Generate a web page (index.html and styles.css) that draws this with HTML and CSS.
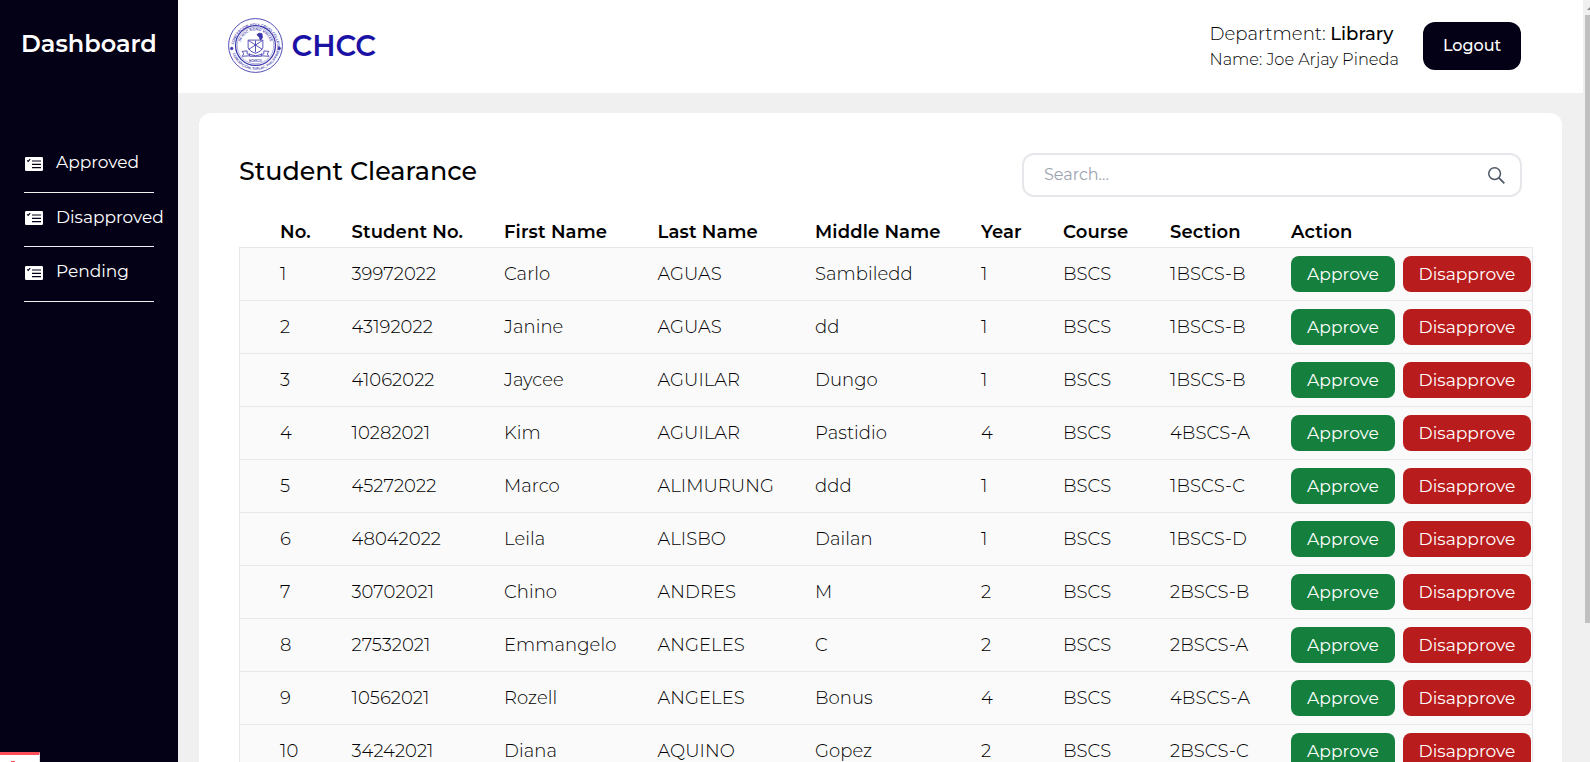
FILE: index.html
```html
<!DOCTYPE html>
<html lang="en">
<head>
<meta charset="utf-8">
<title>Student Clearance</title>
<link rel="stylesheet" href="styles.css">
</head>
<body>
<svg class="defs" width="0" height="0">
  <symbol id="list" viewBox="0 0 18 14">
    <rect width="18" height="14" rx="1.3" fill="#fff"/>
    <path d="M2.200 3.300l1 1 2-2.100M7 4h9M7 7.300h9M7 10.600h9" fill="none" stroke="#030016" stroke-width="1.200"/>
  </symbol>
</svg>
<div class="app">
  <aside class="sidebar">
    <h1 class="brand">Dashboard</h1>
    <nav class="nav">
      <a class="nav-item"><svg class="nav-icon"><use href="#list"/></svg><span>Approved</span></a>
      <a class="nav-item"><svg class="nav-icon"><use href="#list"/></svg><span>Disapproved</span></a>
      <a class="nav-item"><svg class="nav-icon"><use href="#list"/></svg><span>Pending</span></a>
    </nav>
  </aside>
  <main class="main">
    <header class="header">
      <svg class="seal" viewBox="0 0 56 56" fill="none" stroke="#3b36ab">
        <defs>
          <path id="arc-top" d="M5.800 30a22.200 22.200 0 1 1 44.400 0"/>
          <path id="arc-bottom" d="M3.300 28a24.700 24.700 0 0 0 49.400 0"/>
          <path id="arc-inner" d="M12.500 28a15.500 15.500 0 0 1 31 0"/>
        </defs>
        <circle cx="28" cy="28" r="27.400" stroke-width=".9"/>
        <circle cx="28" cy="28" r="20.300" stroke-width="1.300"/>
        <circle cx="28" cy="28" r="18.600" stroke-width=".4"/>
        <g class="seal-text">
          <text><textPath href="#arc-top" startOffset="3">CONCEPCION HOLY CROSS COLLEGE, INC.</textPath></text>
          <text><textPath href="#arc-bottom" startOffset="8">CONCEPCION, TARLAC, PHILIPPINES</textPath></text>
          <text><textPath href="#arc-inner" startOffset="4">IN HOC SIGNO VINCES</textPath></text>
          <text class="seal-year" x="21.500" y="44.600">MCMXCIV</text>
        </g>
        <circle cx="3.800" cy="31" r="1.200" fill="#3b36ab"/><circle cx="52.200" cy="31" r="1.200" fill="#3b36ab"/>
        <path d="M20.500 22.500h15v8q-2 4-7.500 5.500q-5.500-1.500-7.500-5.500zM21 23l14 9M35 23l-14 9M28 23v12M14.500 34l5-.5v3l8.500 2 8.500-2v-3l5 .5-1.500 2.500 1.500 2.500-7-.5M14.500 34l1.500 2.500-1.500 2.500 7-.5M22 36v3h12v-3" stroke-width=".85"/>
        <path d="M29.500 17q2-2.500 5-1l.5 4-2 2.500-1-3z" fill="#3b36ab"/>
      </svg>
      <span class="logo-text">CHCC</span>
      <div class="user">
        <div class="dept">Department: <b>Library</b></div>
        <div class="name">Name: Joe Arjay Pineda</div>
      </div>
      <button class="logout">Logout</button>
    </header>
    <section class="card">
      <div class="toolbar">
        <h2 class="title">Student Clearance</h2>
        <div class="search">
          <span>Search...</span>
          <svg class="search-icon" viewBox="0 0 18 18" fill="none" stroke="#4b5563"><circle cx="7" cy="7" r="6.200" stroke-width="1.600"/><path d="M11.300 11.300L17.300 17.300" stroke-width="1.800"/></svg>
        </div>
      </div>
      <div class="row head"><span>No.</span><span>Student No.</span><span>First Name</span><span>Last Name</span><span>Middle Name</span><span>Year</span><span>Course</span><span>Section</span><span>Action</span></div>
      <div class="rows" id="rows"></div>
    </section>
  </main>
  <div class="scrollbar"><i class="arrow"></i><div class="thumb"></div></div>
</div>
<div class="corner"><i></i></div>
<script src="app.js"></script>
</body>
</html>
```
FILE: styles.css
```css
* { box-sizing: border-box; }
body {
  margin: 0;
  height: 762px;
  overflow: hidden;
  background: #f0f0f0;
  color: #000;
  font-family: Montserrat, Inter, sans-serif;
}
.defs { position: absolute; }
.app { display: flex; height: 762px; overflow: hidden; }
.sidebar { width: 178px; flex: none; background: #040117; color: #fff; }
.brand { margin: 29px 0 0 21px; font-size: 24px; line-height: 30px; font-weight: 600; white-space: nowrap; }
.nav { padding: 79px 24px 0; }
.nav-item { display: flex; align-items: center; height: 54.500px; border-bottom: 1px solid #f0f0f0; font-size: 17px; padding-bottom: 5.500px; white-space: nowrap; }
.nav-icon { width: 18px; height: 14px; margin: 3px 13px 0 1px; flex: none; }
.main { flex: none; width: 1405px; }
.header { display: flex; align-items: center; height: 93px; padding: 0 62px 2px 50px; background: #fff; }
.seal { width: 55px; height: 55px; flex: none; overflow: visible; }
.seal-text { font-size: 3.500px; font-weight: 600; fill: #3b36ab; stroke: none; }
.seal-year { font-size: 2.600px; }
.logo-text { margin: -1px 0 0 8.500px; font-size: 28.800px; font-weight: 600; color: #1b12a5; }
.user { width: 213.500px; margin-left: auto; padding-top: 1px; white-space: nowrap; font-weight: 300; }
.dept { font-size: 18.100px; line-height: 26px; }
.dept b { font-weight: 500; }
.name { font-size: 16.200px; line-height: 25px; }
.logout { width: 98px; height: 48px; border: 0; border-radius: 12px; background: #040117; color: #fff; font: 500 16px Montserrat, Inter, sans-serif; padding: 0; }
.card { width: 1363px; height: 700px; margin: 20px 0 0 21px; padding: 40px 29px 0 40px; border-radius: 12px; background: #fff; }
.toolbar { display: flex; justify-content: space-between; padding-right: 11px; }
.title { margin: 2px 0 0; font-size: 25.400px; line-height: 32px; font-weight: 500; }
.search { display: flex; align-items: center; justify-content: space-between; width: 500px; height: 44px; padding: 0 15px 2px 20px; border: 2px solid #e5e7eb; border-radius: 12px; color: #9ca3af; font-size: 16px; }
.search-icon { width: 17px; height: 17px; margin-top: 2px; }
.row { display: grid; grid-template-columns: 71.500px 152.500px 153.500px 157.500px 166px 82px 107px 121px 1fr; align-items: center; height: 53px; padding-left: 40px; border-bottom: 1px solid #e5e7eb; font-size: 18px; letter-spacing: .06px; font-weight: 300; white-space: nowrap; }
.head { height: 50px; padding: 19px 0 0 41px; border: 0; font-weight: 650; letter-spacing: .13px; }
.rows { border: 1px solid #e5e7eb; background: #fafafa; width: 1294px; }
.actions { display: flex; gap: 8px; }
.btn { height: 36px; border: 0; border-radius: 8px; padding: 0 0 1px; color: #fff; font: 400 17.100px Montserrat, Inter, sans-serif; }
.approve { width: 104px; background: #15803d; }
.disapprove { width: 128px; background: #b91c1c; }
.scrollbar { position: relative; width: 7px; flex: none; padding: 15px 0 0 2px; background: #f0f0f0; }
.thumb { height: 608px; background: #c0c0c0; }
.arrow { position: absolute; left: 4px; top: 6px; border: 4px solid transparent; border-top: 0; border-bottom: 4px solid #888; }
.corner { position: absolute; left: 0; top: 752px; width: 40px; height: 10px; overflow: hidden; background: #fff; border-top: 3px solid #fb4f59; border-right: 1px solid #ddd; }
.corner i { position: absolute; left: 11px; top: 6px; width: 4px; height: 1px; background: #fb4f59; }
```
FILE: app.js
```js
const students = [
  ["39972022", "Carlo", "AGUAS", "Sambiledd", 1, "1BSCS-B"],
  ["43192022", "Janine", "AGUAS", "dd", 1, "1BSCS-B"],
  ["41062022", "Jaycee", "AGUILAR", "Dungo", 1, "1BSCS-B"],
  ["10282021", "Kim", "AGUILAR", "Pastidio", 4, "4BSCS-A"],
  ["45272022", "Marco", "ALIMURUNG", "ddd", 1, "1BSCS-C"],
  ["48042022", "Leila", "ALISBO", "Dailan", 1, "1BSCS-D"],
  ["30702021", "Chino", "ANDRES", "M", 2, "2BSCS-B"],
  ["27532021", "Emmangelo", "ANGELES", "C", 2, "2BSCS-A"],
  ["10562021", "Rozell", "ANGELES", "Bonus", 4, "4BSCS-A"],
  ["34242021", "Diana", "AQUINO", "Gopez", 2, "2BSCS-C"]
];
document.getElementById("rows").innerHTML = students.map((s, i) => {
  const cells = [i + 1, s[0], s[1], s[2], s[3], s[4], "BSCS", s[5]];
  return `<div class="row">${cells.map(c => `<span>${c}</span>`).join("")}` +
    `<div class="actions"><button class="btn approve">Approve</button><button class="btn disapprove">Disapprove</button></div></div>`;
}).join("");
```
